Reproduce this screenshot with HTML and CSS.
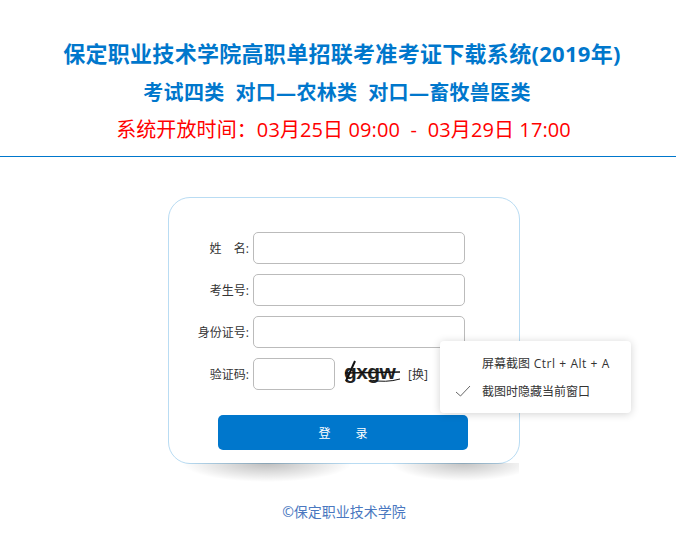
FILE: index.html
```html
<!DOCTYPE html>
<html lang="zh-CN">
<head>
<meta charset="utf-8">
<title>保定职业技术学院高职单招联考准考证下载系统</title>
<link rel="stylesheet" href="styles.css">
</head>
<body>
<header class="header">
  <h1 class="title">保定职业技术学院高职单招联考准考证下载系统(2019年)</h1>
  <h2 class="subtitle">考试四类&nbsp; 对口—农林类&nbsp; 对口—畜牧兽医类</h2>
  <p class="time">系统开放时间<span class="colon">：</span>03月25日 09:00&nbsp; -&nbsp; 03月29日 17:00</p>
</header>
<main class="main">
  <form class="card">
    <div class="row"><label class="label">姓&nbsp;&nbsp;&nbsp;&nbsp;名:</label><input class="input" type="text"></div>
    <div class="row"><label class="label">考生号:</label><input class="input" type="text"></div>
    <div class="row"><label class="label">身份证号:</label><input class="input" type="text"></div>
    <div class="row">
      <label class="label">验证码:</label><input class="input input-code" type="text">
      <span class="captcha">
        <span class="captcha-text">gxgw</span>
        <svg class="captcha-lines" width="58" height="26" viewBox="0 0 58 26"><path d="M1 14 L56 13" stroke="#111" stroke-width="1.3" fill="none"/><path d="M2 22 L11 2" stroke="#111" stroke-width="2" fill="none"/><path d="M26 21 Q42 24 56 20" stroke="#111" stroke-width="1" fill="none"/></svg>
      </span>
      <a class="swap">[换]</a>
    </div>
    <button class="submit" type="button"><span class="submit-gap">登</span>录</button>
  </form>
</main>
<footer class="footer">©保定职业技术学院</footer>
<div class="menu">
  <div class="menu-item"><span class="menu-check"></span>屏幕截图<span class="menu-keys">&nbsp;Ctrl + Alt + A</span></div>
  <div class="menu-item"><span class="menu-check"><svg width="16" height="12" viewBox="0 0 16 12"><path d="M1 7 L5.5 11 L15 1" stroke="#666" stroke-width="1" fill="none"/></svg></span>截图时隐藏当前窗口</div>
</div>
</body>
</html>
```
FILE: styles.css
```css
* { box-sizing: border-box; }
html, body { margin: 0; padding: 0; }
html { background: #fff; }
body {
  position: relative;
  height: 537px;
  overflow: hidden;
  font-family: "Open Sans", "Noto Sans CJK SC", sans-serif;
}
.header {
  height: 157px;
  padding-top: 36px;
  border-bottom: 1px solid #0077cc;
  text-align: center;
}
.title, .subtitle, .time { margin: 0; white-space: nowrap; }
.title {
  height: 38px;
  font-size: 22px;
  line-height: 34px;
  font-weight: 700;
  letter-spacing: 0.3px;
  color: #0077cc;
  padding-left: 8px;
}
.subtitle {
  height: 37px;
  font-size: 20px;
  line-height: 38px;
  font-weight: 700;
  letter-spacing: 0.3px;
  color: #0077cc;
  padding-right: 2px;
}
.time {
  height: 36px;
  font-size: 20px;
  line-height: 36px;
  letter-spacing: 0.1px;
  color: #ff0000;
  padding-left: 11px;
}
.colon { font-family: "Noto Sans CJK TC", sans-serif; }
.main { padding: 40px 0 0 168px; }
.card {
  position: relative;
  width: 352px;
  height: 267px;
  padding: 34px 0 0 0;
  background: #fff;
  border: 1px solid #b9dcf3;
  border-radius: 22px;
}
.card::after {
  content: "";
  position: absolute;
  left: 0;
  right: 0;
  top: 100%;
  height: 22px;
  background:
    radial-gradient(ellipse 85px 19px at 28% 0, rgba(0, 0, 0, 0.26), transparent),
    radial-gradient(ellipse 72px 18px at 84% 0, rgba(0, 0, 0, 0.24), transparent);
}
.row {
  display: flex;
  align-items: center;
  height: 32px;
  margin-bottom: 10px;
}
.label {
  width: 84px;
  padding-right: 4px;
  text-align: right;
  font-size: 12px;
  color: #333;
  white-space: nowrap;
}
.input {
  width: 212px;
  height: 32px;
  padding: 0 6px;
  background: #fff;
  border: 1px solid #bbb;
  border-radius: 5px;
  outline: none;
}
.input-code { width: 82px; }
.captcha {
  position: relative;
  display: block;
  width: 58px;
  height: 26px;
  margin: 0 0 4px 9px;
}
.captcha-text {
  display: block;
  font-family: "Liberation Sans", sans-serif;
  font-size: 21px;
  line-height: 26px;
  font-weight: 700;
  letter-spacing: -0.6px;
  color: #222;
}
.captcha-lines { position: absolute; left: 0; top: 0; }
.swap {
  margin-left: 6px;
  font-size: 12px;
  color: #333;
}
.submit {
  display: block;
  width: 250px;
  height: 35px;
  margin: 25px 0 0 49px;
  border: 0;
  border-radius: 5px;
  background: #0077cc;
  color: #fff;
  font-family: inherit;
  font-size: 12px;
}
.submit-gap { margin-right: 25px; }
.footer {
  margin-top: 38px;
  padding-left: 12px;
  text-align: center;
  font-size: 14px;
  line-height: 20px;
  color: #4a78c0;
}
.menu {
  position: absolute;
  left: 440px;
  top: 341px;
  width: 191px;
  height: 72px;
  padding-top: 8px;
  background: #fff;
  border-radius: 4px;
  box-shadow: 0 1px 8px rgba(0, 0, 0, 0.18);
}
.menu-item {
  display: flex;
  align-items: center;
  height: 28px;
  padding-left: 15px;
  font-size: 12px;
  color: #333;
  white-space: nowrap;
}
.menu-keys { letter-spacing: 0.55px; }
.menu-check { display: block; width: 27px; height: 12px; }
.menu-check svg { display: block; }
```
